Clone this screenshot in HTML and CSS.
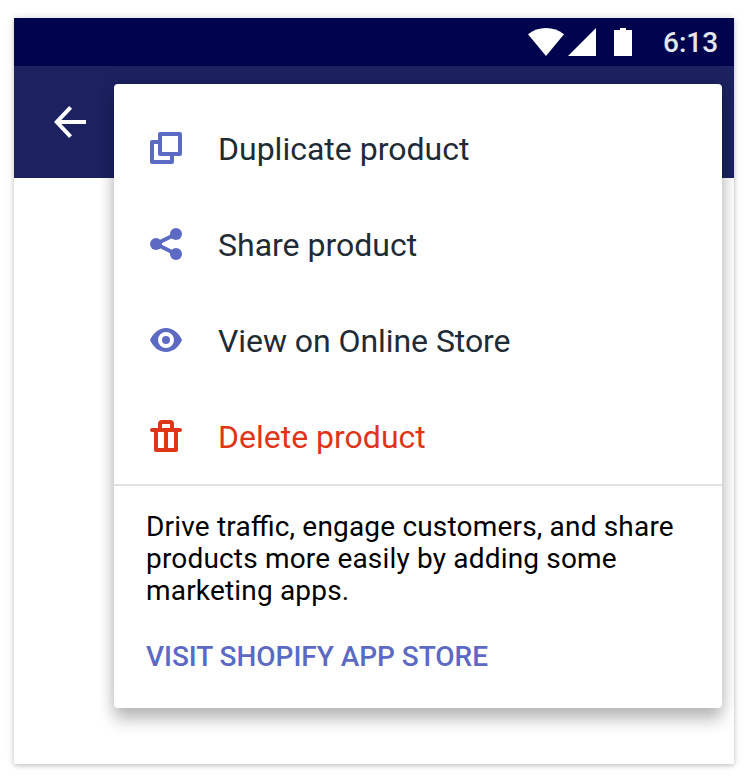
FILE: index.html
```
<!DOCTYPE html>
<html lang="en">
<head>
<meta charset="utf-8">
<title>Product menu</title>
<link rel="stylesheet" href="styles.css">
</head>
<body>
<main class="device">
  <header class="status-bar">
    <svg class="wifi" width="36" height="28" viewBox="0 0 36 28"><path d="M0 6.200Q8 0 18 0T36 6.200L18 28Z" fill="#fff"/></svg>
    <svg class="signal" width="28" height="28" viewBox="0 0 28 28"><path d="M28 0V28H0Z" fill="#fff"/></svg>
    <svg class="battery" width="18" height="28" viewBox="0 0 18 28"><path d="M6 0h6v2h6v26H0V2h6Z" fill="#fff"/></svg>
    <span class="clock">6:13</span>
  </header>
  <div class="app-bar">
    <svg width="34" height="32" viewBox="0 0 34 32" fill="none" stroke="#fff" stroke-width="4"><path d="M33 16H4M17.600 1.400 3.800 16l13.800 14.600"/></svg>
  </div>
  <section class="menu">
    <ul class="actions">
      <li class="action">
        <svg width="32" height="32" viewBox="0 0 32 32" fill="none" stroke="#5c6ac4" stroke-width="4" stroke-linejoin="round"><path d="M10 2h20v20H10ZM8 10H2v20h20v-6"/></svg>
        <span class="label">Duplicate product</span>
      </li>
      <li class="action">
        <svg width="32" height="32" viewBox="0 0 32 32" fill="#5c6ac4"><path d="M26 6 6 16l20 10" fill="none" stroke="#5c6ac4" stroke-width="4"/><circle cx="26" cy="6" r="6"/><circle cx="6" cy="16" r="6"/><circle cx="26" cy="26" r="6"/></svg>
        <span class="label">Share product</span>
      </li>
      <li class="action">
        <svg width="32" height="32" viewBox="0 0 32 32"><path d="M0 16C3 9 9 4 16 4s13 5 16 12c-3 7-9 12-16 12S3 23 0 16Z" fill="#5c6ac4"/><circle cx="16" cy="16" r="6" fill="#5c6ac4" stroke="#fff" stroke-width="4"/></svg>
        <span class="label label-view">View on Online Store</span>
      </li>
      <li class="action critical">
        <svg width="32" height="32" viewBox="0 0 32 32" fill="none" stroke="#de3618" stroke-width="4" stroke-linecap="round" stroke-linejoin="round"><path d="M2 10h28M10 10V4q0-2 2-2h8q2 0 2 2v6M6 10v20h20V10M16 10v20"/></svg>
        <span class="label">Delete product</span>
      </li>
    </ul>
    <div class="promo">
      <p class="promo-text">Drive tra<span class="ligature">ffi</span>c, engage customers, and share<br>products more easily by adding some<br>marketing apps.</p>
      <a class="promo-link">VISIT SHOPIFY APP STORE</a>
    </div>
  </section>
</main>
</body>
</html>
```
FILE: styles.css
```
body {
  margin: 0;
  padding: 18px 14px 20px;
  background: #fff;
  font-family: Roboto, "Liberation Sans", sans-serif;
}

svg {
  display: block;
  flex: none;
}

.device {
  position: relative;
  height: 746px;
  background: #fff;
  box-shadow: 0 0 8px rgba(0, 0, 0, 0.14), 0 2px 4px rgba(0, 0, 0, 0.14);
}

.status-bar {
  display: flex;
  align-items: center;
  justify-content: flex-end;
  box-sizing: border-box;
  height: 48px;
  padding-right: 15px;
  background: #00044c;
}

.signal {
  margin-left: 4px;
}

.battery {
  margin-left: 18px;
}

.clock {
  width: 56px;
  margin-left: 31px;
  padding-top: 2px;
  color: #e5e5ed;
  font-size: 28px;
  font-weight: 500;
  line-height: 46px;
  white-space: nowrap;
}

.app-bar {
  display: flex;
  align-items: center;
  box-sizing: border-box;
  height: 112px;
  padding-left: 39px;
  background: #1c2260;
}

.menu {
  position: absolute;
  top: 66px;
  left: 100px;
  box-sizing: border-box;
  width: 608px;
  height: 624px;
  padding-top: 16px;
  border-radius: 4px;
  background: #fff;
  box-shadow: 0 0 16px rgba(0, 0, 0, 0.12), 0 12px 16px rgba(0, 0, 0, 0.24);
}

.actions {
  margin: 0;
  padding: 0;
  border-bottom: 2px solid #dfe3e8;
  list-style: none;
}

.action {
  display: flex;
  align-items: center;
  gap: 36px;
  height: 96px;
  padding-left: 36px;
  color: #212b36;
}

.label {
  padding-top: 2px;
  font-size: 32px;
  line-height: 40px;
  white-space: nowrap;
}

.label-view {
  letter-spacing: -0.06px;
}

.critical {
  color: #de3618;
}

.promo {
  padding: 25px 32px;
}

.promo-text {
  margin: 0 0 34px;
  color: #000;
  font-size: 28px;
  line-height: 32px;
  letter-spacing: 0.18px;
  white-space: nowrap;
}

.ligature {
  letter-spacing: normal;
}

.promo-link {
  color: #5c6ac4;
  font-size: 28px;
  font-weight: 500;
  line-height: 32px;
  letter-spacing: -0.04px;
  white-space: nowrap;
}
```
